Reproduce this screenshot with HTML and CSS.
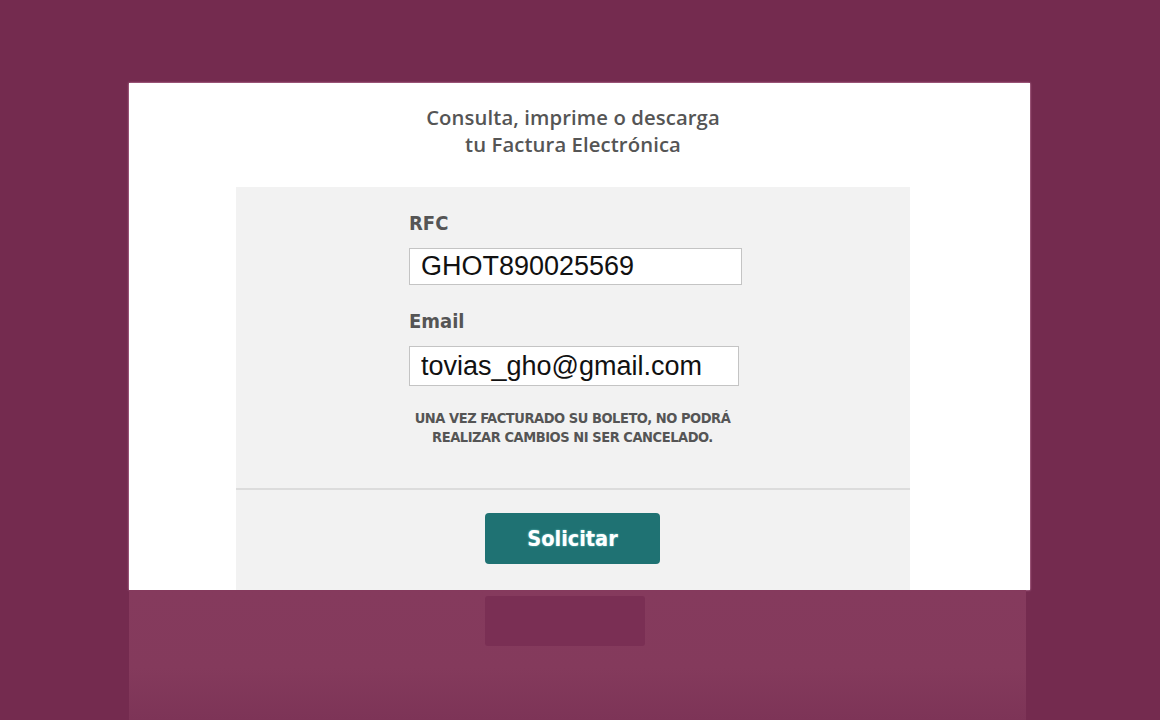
FILE: index.html
```html
<!DOCTYPE html>
<html lang="es">
<head>
<meta charset="utf-8">
<title>Factura Electrónica</title>
<link rel="stylesheet" href="styles.css">
</head>
<body>
<main class="stage">
  <section class="card">
    <div class="content">
      <h1 class="title">Consulta, imprime o descarga<br>tu Factura Electrónica</h1>
      <div class="panel">
        <form class="form">
          <label class="label" for="rfc">RFC</label>
          <input class="field field-rfc" id="rfc" type="text" value="GHOT890025569">
          <label class="label label-email" for="email">Email</label>
          <input class="field field-email" id="email" type="text" value="tovias_gho@gmail.com">
          <p class="notice">UNA VEZ FACTURADO SU BOLETO, NO PODRÁ<br>REALIZAR CAMBIOS NI SER CANCELADO.</p>
        </form>
        <div class="actions">
          <button class="btn" type="button">Solicitar</button>
        </div>
      </div>
    </div>
  </section>
  <div class="reflection" aria-hidden="true">
    <div class="ghost-btn"></div>
  </div>
</main>
</body>
</html>
```
FILE: styles.css
```css
* { box-sizing: border-box; }
html, body { margin: 0; padding: 0; }
body {
  background: #742b4f;
  width: 1160px;
  height: 720px;
  overflow: hidden;
  font-family: "Open Sans", "DejaVu Sans", sans-serif;
}
.stage {
  padding-top: 83px;
  padding-left: 129px;
  display: flex;
  flex-direction: column;
}
.card {
  width: 901px;
  height: 507px;
  background: #ffffff;
  box-shadow: 0 0 2px rgba(255, 200, 230, 0.8);
  padding-left: 107px;
  display: flex;
}
.content {
  width: 674px;
  display: flex;
  flex-direction: column;
}
.title {
  margin: 0;
  padding-top: 21px;
  height: 104px;
  text-align: center;
  font-family: "Open Sans", sans-serif;
  font-weight: 600;
  font-size: 20.3px;
  line-height: 27px;
  color: #555555;
  letter-spacing: 0.1px;
}
.panel {
  flex: 1;
  background: #f2f2f2;
  display: flex;
  flex-direction: column;
}
.form {
  margin: 0;
  padding: 25px 0 0 173px;
  height: 303px;
  border-bottom: 2px solid #dcdcdc;
  display: flex;
  flex-direction: column;
  align-items: flex-start;
}
.label {
  font-family: "DejaVu Sans Condensed", "DejaVu Sans", sans-serif;
  font-weight: bold;
  font-size: 20px;
  line-height: 22px;
  color: #555555;
  margin-bottom: 14px;
}
.label-email { margin-top: 25px; margin-bottom: 14px; }
.field {
  height: 37px;
  width: 333px;
  border: 1px solid #c4c4c4;
  background: #ffffff;
  padding: 0 11px;
  font-family: "Liberation Sans", Arial, sans-serif;
  font-size: 27px;
  color: #111111;
  outline: none;
}
.field-email {
  height: 40px;
  width: 330px;
}
.notice {
  margin: 23px 0 0 0;
  width: 327px;
  text-align: center;
  font-family: "DejaVu Sans Condensed", "DejaVu Sans", sans-serif;
  font-weight: bold;
  font-size: 14.5px;
  line-height: 19px;
  letter-spacing: -0.45px;
  color: #555555;
  white-space: nowrap;
}
.actions {
  flex: 1;
  display: flex;
  justify-content: flex-start;
  padding-left: 249px;
  padding-top: 23px;
}
.btn {
  width: 175px;
  height: 51px;
  border: none;
  border-radius: 4px;
  background: #1f7273;
  color: #ffffff;
  font-family: "DejaVu Sans Condensed", "DejaVu Sans", sans-serif;
  font-weight: bold;
  font-size: 21.5px;
  text-shadow: 0 0 2px rgba(160, 255, 255, 0.7);
  cursor: pointer;
}
.reflection {
  width: 897px;
  height: 130px;
  background: linear-gradient(#853a5d, #843a5c 60%, #7d3457);
  padding-left: 356px;
  padding-top: 6px;
}
.ghost-btn {
  width: 160px;
  height: 50px;
  background: #7a2f54;
  border-radius: 3px;
}
```
